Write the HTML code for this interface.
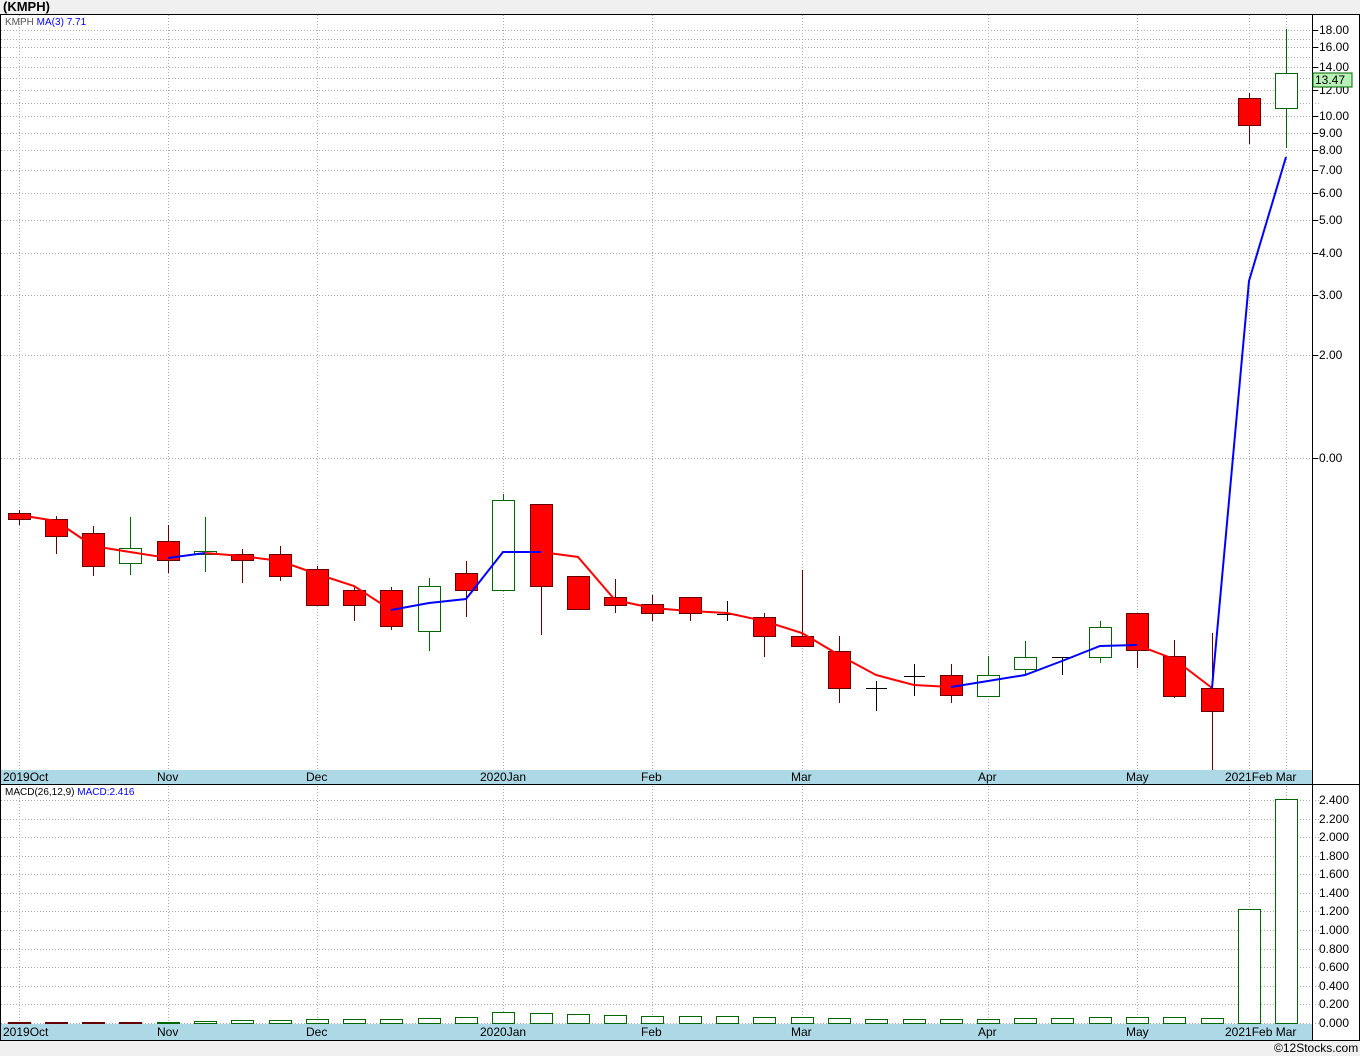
<!DOCTYPE html><html><head><style>body{margin:0;background:#f0f0f0;width:1360px;height:1056px;overflow:hidden;font-family:"Liberation Sans",sans-serif}svg{display:block}</style></head><body>
<svg width="1360" height="1056" xmlns="http://www.w3.org/2000/svg" font-family="Liberation Sans, sans-serif">
<rect x="0" y="0" width="1360" height="1056" fill="#f0f0f0"/>
<text x="3" y="11" font-size="13" font-weight="bold" fill="#000">(KMPH)</text>
<rect x="0.5" y="14.5" width="1359" height="1026" fill="#fff" stroke="#000"/>
<g stroke="#aaa" stroke-dasharray="1,2" stroke-width="1">
<line x1="19.5" y1="15" x2="19.5" y2="1040"/><line x1="168.5" y1="15" x2="168.5" y2="1040"/><line x1="317.5" y1="15" x2="317.5" y2="1040"/><line x1="503.5" y1="15" x2="503.5" y2="1040"/><line x1="652.5" y1="15" x2="652.5" y2="1040"/><line x1="802.5" y1="15" x2="802.5" y2="1040"/><line x1="988.5" y1="15" x2="988.5" y2="1040"/><line x1="1137.5" y1="15" x2="1137.5" y2="1040"/><line x1="1249.5" y1="15" x2="1249.5" y2="1040"/><line x1="1286.5" y1="15" x2="1286.5" y2="1040"/>
<line x1="1" y1="30.5" x2="1320" y2="30.5"/><line x1="1" y1="47.5" x2="1320" y2="47.5"/><line x1="1" y1="67.5" x2="1320" y2="67.5"/><line x1="1" y1="90.5" x2="1320" y2="90.5"/><line x1="1" y1="116.5" x2="1320" y2="116.5"/><line x1="1" y1="133.5" x2="1320" y2="133.5"/><line x1="1" y1="150.5" x2="1320" y2="150.5"/><line x1="1" y1="170.5" x2="1320" y2="170.5"/><line x1="1" y1="193.5" x2="1320" y2="193.5"/><line x1="1" y1="220.5" x2="1320" y2="220.5"/><line x1="1" y1="253.5" x2="1320" y2="253.5"/><line x1="1" y1="295.5" x2="1320" y2="295.5"/><line x1="1" y1="355.5" x2="1320" y2="355.5"/><line x1="1" y1="458.5" x2="1320" y2="458.5"/>
<line x1="1" y1="39.5" x2="1320" y2="39.5"/><line x1="1" y1="57.5" x2="1320" y2="57.5"/><line x1="1" y1="78.5" x2="1320" y2="78.5"/><line x1="1" y1="103.5" x2="1320" y2="103.5"/>
<line x1="1" y1="800.5" x2="1320" y2="800.5"/><line x1="1" y1="819.5" x2="1320" y2="819.5"/><line x1="1" y1="837.5" x2="1320" y2="837.5"/><line x1="1" y1="856.5" x2="1320" y2="856.5"/><line x1="1" y1="874.5" x2="1320" y2="874.5"/><line x1="1" y1="893.5" x2="1320" y2="893.5"/><line x1="1" y1="911.5" x2="1320" y2="911.5"/><line x1="1" y1="930.5" x2="1320" y2="930.5"/><line x1="1" y1="949.5" x2="1320" y2="949.5"/><line x1="1" y1="967.5" x2="1320" y2="967.5"/><line x1="1" y1="986.5" x2="1320" y2="986.5"/><line x1="1" y1="1004.5" x2="1320" y2="1004.5"/><line x1="1" y1="1023.5" x2="1320" y2="1023.5"/>
</g>
<g stroke="#000"><line x1="1312.5" y1="14" x2="1312.5" y2="1040"/><line x1="0" y1="784.5" x2="1360" y2="784.5"/></g>
<rect x="1" y="770" width="1311" height="14" fill="#add8e6"/><rect x="1" y="1024" width="1311" height="16" fill="#add8e6"/>
<g font-size="12" fill="#000">
<text x="3" y="781">2019Oct</text><text x="157" y="781">Nov</text><text x="306" y="781">Dec</text><text x="480" y="781">2020Jan</text><text x="641" y="781">Feb</text><text x="791" y="781">Mar</text><text x="978" y="781">Apr</text><text x="1126" y="781">May</text><text x="1225" y="781">2021Feb Mar</text>
<text x="3" y="1036">2019Oct</text><text x="157" y="1036">Nov</text><text x="306" y="1036">Dec</text><text x="480" y="1036">2020Jan</text><text x="641" y="1036">Feb</text><text x="791" y="1036">Mar</text><text x="978" y="1036">Apr</text><text x="1126" y="1036">May</text><text x="1225" y="1036">2021Feb Mar</text>
</g>
<text x="5" y="25" font-size="10" fill="#555">KMPH <tspan fill="#00f">MA(3)</tspan> <tspan fill="#00f">  7.71</tspan></text>
<text x="5" y="795" font-size="10" fill="#000">MACD(26,12,9) <tspan fill="#00f">MACD:2.416</tspan></text>
<g font-size="12" fill="#000">
<g stroke="#000"><line x1="1313" y1="30.5" x2="1318" y2="30.5"/><line x1="1313" y1="47.5" x2="1318" y2="47.5"/><line x1="1313" y1="67.5" x2="1318" y2="67.5"/><line x1="1313" y1="90.5" x2="1318" y2="90.5"/><line x1="1313" y1="116.5" x2="1318" y2="116.5"/><line x1="1313" y1="133.5" x2="1318" y2="133.5"/><line x1="1313" y1="150.5" x2="1318" y2="150.5"/><line x1="1313" y1="170.5" x2="1318" y2="170.5"/><line x1="1313" y1="193.5" x2="1318" y2="193.5"/><line x1="1313" y1="220.5" x2="1318" y2="220.5"/><line x1="1313" y1="253.5" x2="1318" y2="253.5"/><line x1="1313" y1="295.5" x2="1318" y2="295.5"/><line x1="1313" y1="355.5" x2="1318" y2="355.5"/><line x1="1313" y1="458.5" x2="1318" y2="458.5"/></g>
<text x="1319" y="34">18.00</text><text x="1319" y="51">16.00</text><text x="1319" y="71">14.00</text><text x="1319" y="94">12.00</text><text x="1319" y="120">10.00</text><text x="1319" y="137">9.00</text><text x="1319" y="154">8.00</text><text x="1319" y="174">7.00</text><text x="1319" y="197">6.00</text><text x="1319" y="224">5.00</text><text x="1319" y="257">4.00</text><text x="1319" y="299">3.00</text><text x="1319" y="359">2.00</text><text x="1319" y="462">0.00</text>
<rect x="1313" y="73" width="39" height="14" fill="#b8f0b8" stroke="#060"/><text x="1315" y="84">13.47</text>
<text x="1319" y="804">2.400</text><text x="1319" y="823">2.200</text><text x="1319" y="841">2.000</text><text x="1319" y="860">1.800</text><text x="1319" y="878">1.600</text><text x="1319" y="897">1.400</text><text x="1319" y="915">1.200</text><text x="1319" y="934">1.000</text><text x="1319" y="953">0.800</text><text x="1319" y="971">0.600</text><text x="1319" y="990">0.400</text><text x="1319" y="1008">0.200</text><text x="1319" y="1027">0.000</text>
</g>
<g stroke-width="1">
<g stroke="#600"><line x1="19.5" y1="510" x2="19.5" y2="525"/><line x1="56.5" y1="516" x2="56.5" y2="554"/><line x1="93.5" y1="526" x2="93.5" y2="576"/><line x1="168.5" y1="525" x2="168.5" y2="573"/><line x1="242.5" y1="549" x2="242.5" y2="583"/><line x1="280.5" y1="546" x2="280.5" y2="581"/><line x1="317.5" y1="566" x2="317.5" y2="605"/><line x1="354.5" y1="586" x2="354.5" y2="621"/><line x1="391.5" y1="587" x2="391.5" y2="630"/><line x1="466.5" y1="561" x2="466.5" y2="617"/><line x1="541.5" y1="504" x2="541.5" y2="635"/><line x1="578.5" y1="576" x2="578.5" y2="609"/><line x1="615.5" y1="579" x2="615.5" y2="613"/><line x1="652.5" y1="595" x2="652.5" y2="621"/><line x1="690.5" y1="597" x2="690.5" y2="621"/><line x1="764.5" y1="613" x2="764.5" y2="657"/><line x1="802.5" y1="570" x2="802.5" y2="646"/><line x1="839.5" y1="636" x2="839.5" y2="703"/><line x1="951.5" y1="664" x2="951.5" y2="703"/><line x1="1137.5" y1="613" x2="1137.5" y2="668"/><line x1="1174.5" y1="640" x2="1174.5" y2="698"/><line x1="1212.5" y1="633" x2="1212.5" y2="770"/><line x1="1249.5" y1="93" x2="1249.5" y2="144"/></g>
<g stroke="#060"><line x1="130.5" y1="517" x2="130.5" y2="575"/><line x1="205.5" y1="517" x2="205.5" y2="572"/><line x1="429.5" y1="578" x2="429.5" y2="651"/><line x1="503.5" y1="494" x2="503.5" y2="590"/><line x1="988.5" y1="656" x2="988.5" y2="696"/><line x1="1025.5" y1="641" x2="1025.5" y2="675"/><line x1="1100.5" y1="621" x2="1100.5" y2="663"/><line x1="1286.5" y1="29" x2="1286.5" y2="148"/></g>
<g stroke="#000"><line x1="727.5" y1="601" x2="727.5" y2="621"/><line x1="717" y1="614.5" x2="738" y2="614.5"/><line x1="876.5" y1="681" x2="876.5" y2="711"/><line x1="866" y1="688.5" x2="887" y2="688.5"/><line x1="914.5" y1="664" x2="914.5" y2="696"/><line x1="904" y1="676.5" x2="925" y2="676.5"/><line x1="1062.5" y1="657" x2="1062.5" y2="675"/><line x1="1052" y1="657.5" x2="1073" y2="657.5"/></g>
</g>
<g fill="#f00" stroke="#600">
<rect x="8.5" y="513.5" width="22" height="6"/><rect x="45.5" y="519.5" width="22" height="17"/><rect x="82.5" y="533.5" width="22" height="33"/><rect x="157.5" y="541.5" width="22" height="19"/><rect x="231.5" y="554.5" width="22" height="6"/><rect x="269.5" y="554.5" width="22" height="22"/><rect x="306.5" y="569.5" width="22" height="36"/><rect x="343.5" y="590.5" width="22" height="15"/><rect x="380.5" y="590.5" width="22" height="36"/><rect x="455.5" y="573.5" width="22" height="17"/><rect x="530.5" y="504.5" width="22" height="82"/><rect x="567.5" y="576.5" width="22" height="33"/><rect x="604.5" y="597.5" width="22" height="8"/><rect x="641.5" y="604.5" width="22" height="9"/><rect x="679.5" y="597.5" width="22" height="16"/><rect x="753.5" y="617.5" width="22" height="19"/><rect x="791.5" y="636.5" width="22" height="10"/><rect x="828.5" y="651.5" width="22" height="37"/><rect x="940.5" y="675.5" width="22" height="20"/><rect x="1126.5" y="613.5" width="22" height="37"/><rect x="1163.5" y="656.5" width="22" height="40"/><rect x="1201.5" y="688.5" width="22" height="23"/><rect x="1238.5" y="98.5" width="22" height="27"/>
</g>
<g fill="#fff" stroke="#060">
<rect x="119.5" y="548.5" width="22" height="15"/><rect x="194.5" y="551.5" width="22" height="3"/><rect x="418.5" y="586.5" width="22" height="45"/><rect x="492.5" y="500.5" width="22" height="90"/><rect x="977.5" y="675.5" width="22" height="21"/><rect x="1014.5" y="657.5" width="22" height="12"/><rect x="1089.5" y="627.5" width="22" height="30"/><rect x="1275.5" y="73.5" width="22" height="35"/>
</g>
<g fill="none" stroke-width="2">
<polyline stroke="#f00" points="19,515 56,521 93,546 130,552 168,558"/>
<polyline stroke="#00f" points="168,558 205,553"/>
<polyline stroke="#f00" points="205,553 242,556 280,561 317,574 354,586 391,610"/>
<polyline stroke="#00f" points="391,610 429,603 466,599 503,552 541,552"/>
<polyline stroke="#f00" points="541,552 578,557 615,600 652,608 690,611 727,613 764,621 802,633 839,655 876,675 914,685 951,687"/>
<polyline stroke="#00f" points="951,687 988,681 1025,675 1062,661 1100,646 1137,645"/>
<polyline stroke="#f00" points="1137,645 1174,659 1212,688"/>
<polyline stroke="#00f" points="1212,688 1249,281 1286,157"/>
</g>
<g stroke="#600" fill="#f00"><rect x="8.5" y="1022.5" width="22" height="1"/><rect x="45.5" y="1022.5" width="22" height="1"/><rect x="82.5" y="1022.5" width="22" height="1"/><rect x="119.5" y="1022.5" width="22" height="1" fill="#600"/></g>
<g fill="#fff" stroke="#060">
<rect x="157.5" y="1022.5" width="22" height="1"/><rect x="194.5" y="1021.5" width="22" height="2"/><rect x="231.5" y="1020.5" width="22" height="3"/><rect x="269.5" y="1020.5" width="22" height="3"/><rect x="306.5" y="1019.5" width="22" height="4"/><rect x="343.5" y="1019.5" width="22" height="4"/><rect x="380.5" y="1019.5" width="22" height="4"/><rect x="418.5" y="1018.5" width="22" height="5"/><rect x="455.5" y="1017.5" width="22" height="6"/><rect x="492.5" y="1012.5" width="22" height="11"/><rect x="530.5" y="1013.5" width="22" height="10"/><rect x="567.5" y="1014.5" width="22" height="9"/><rect x="604.5" y="1015.5" width="22" height="8"/><rect x="641.5" y="1016.5" width="22" height="7"/><rect x="679.5" y="1016.5" width="22" height="7"/><rect x="716.5" y="1016.5" width="22" height="7"/><rect x="753.5" y="1017.5" width="22" height="6"/><rect x="791.5" y="1017.5" width="22" height="6"/><rect x="828.5" y="1018.5" width="22" height="5"/><rect x="865.5" y="1019.5" width="22" height="4"/><rect x="903.5" y="1019.5" width="22" height="4"/><rect x="940.5" y="1019.5" width="22" height="4"/><rect x="977.5" y="1019.5" width="22" height="4"/><rect x="1014.5" y="1018.5" width="22" height="5"/><rect x="1051.5" y="1018.5" width="22" height="5"/><rect x="1089.5" y="1017.5" width="22" height="6"/><rect x="1126.5" y="1017.5" width="22" height="6"/><rect x="1163.5" y="1017.5" width="22" height="6"/><rect x="1201.5" y="1018.5" width="22" height="5"/><rect x="1238.5" y="909.5" width="22" height="114"/><rect x="1275.5" y="799.5" width="22" height="224"/>
</g>
<text x="1274" y="1052" font-size="12" fill="#000">©12Stocks.com</text>
</svg></body></html>
